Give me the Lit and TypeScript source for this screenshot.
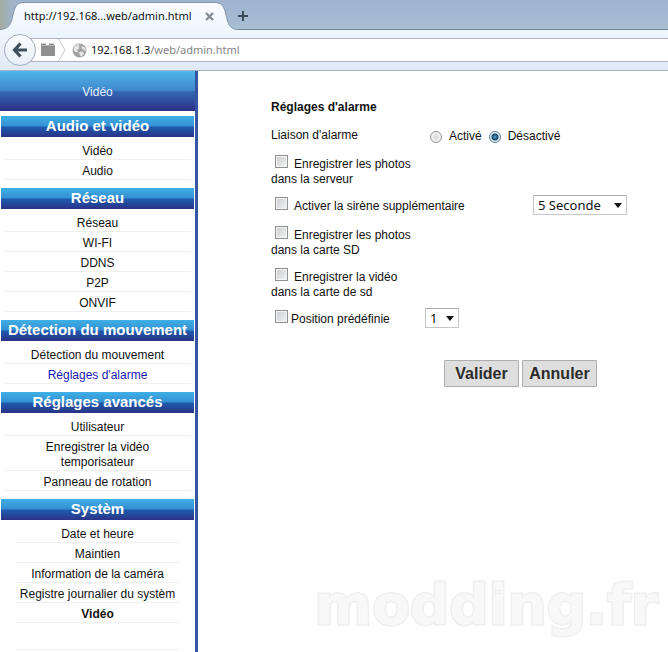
import { LitElement, html, css, svg, nothing } from "lit";
import { customElement, property, state } from "lit/decorators.js";
import { classMap } from "lit/directives/class-map.js";

interface MenuItem {
  label: string;
  kind?: "active" | "strong";
}

interface MenuSection {
  title: string;
  narrow?: boolean;
  items: MenuItem[];
}

const MENU: MenuSection[] = [
  { title: "Audio et vidéo", items: [{ label: "Vidéo" }, { label: "Audio" }] },
  {
    title: "Réseau",
    items: [
      { label: "Réseau" },
      { label: "WI-FI" },
      { label: "DDNS" },
      { label: "P2P" },
      { label: "ONVIF" },
    ],
  },
  {
    title: "Détection du mouvement",
    items: [
      { label: "Détection du mouvement" },
      { label: "Réglages d'alarme", kind: "active" },
    ],
  },
  {
    title: "Réglages avancés",
    items: [
      { label: "Utilisateur" },
      { label: "Enregistrer la vidéo temporisateur" },
      { label: "Panneau de rotation" },
    ],
  },
  {
    title: "Systèm",
    narrow: true,
    items: [
      { label: "Date et heure" },
      { label: "Maintien" },
      { label: "Information de la caméra" },
      { label: "Registre journalier du systèm" },
      { label: "Vidéo", kind: "strong" },
    ],
  },
];

@customElement("browser-chrome")
export class BrowserChrome extends LitElement {
  static styles = css`
    :host {
      display: block;
      font: 11px/16px "Noto Sans", sans-serif;
      color: #111;
    }
    button {
      border: 0;
      padding: 0;
      background: none;
      display: grid;
      place-items: center;
    }
    svg {
      display: block;
    }
    .strip {
      display: flex;
      height: 30px;
      background:
        linear-gradient(90deg, #a3ab9c 0, #9fb3c4 10px, transparent 24px),
        linear-gradient(#9db4d0, #a5b9d2 60%, #a9c0d2);
      box-shadow: inset 0 -1px #74849a;
    }
    .tab {
      position: relative;
      display: flex;
      align-items: center;
      width: 238px;
      box-sizing: border-box;
      padding: 2px 24px 0 24px;
    }
    .shape {
      position: absolute;
      inset: 0;
    }
    .tab-title {
      position: relative;
      flex: 1;
      white-space: nowrap;
    }
    .close {
      position: relative;
    }
    .add {
      width: 10px;
      padding-top: 2px;
    }
    .bar {
      display: flex;
      align-items: center;
      height: 40px;
      padding-left: 4px;
      background: linear-gradient(#eef7fe, #e0e9f6);
      border-bottom: 1px solid #a5b5c8;
    }
    .back {
      position: relative;
      width: 32px;
      height: 32px;
      border: 1px solid #a1acbb;
      border-radius: 50%;
      background: linear-gradient(#fbfdff, #e6eef8);
      flex: none;
    }
    .address {
      flex: 1;
      display: flex;
      align-items: center;
      height: 22px;
      margin-left: -6px;
      padding-left: 10px;
      background: #fff;
      border: solid #abb4c4;
      border-width: 1px 0;
    }
    .globe {
      margin: 0 4px 0 6px;
    }
    .path {
      color: #858585;
    }
  `;

  render() {
    return html`
      <header>
        <div class="strip">
          <div class="tab">
            <svg class="shape" width="238" height="30" viewBox="0 0 238 30">
              <defs>
                <linearGradient id="tabfill" x2="0" y2="1">
                  <stop offset="0" stop-color="#fafcff" />
                  <stop offset="1" stop-color="#eef7fe" />
                </linearGradient>
              </defs>
              <path
                d="M0 29.5C9 29 11 24 13 15C15 6 17 2.500 24 2.500H214C222 2.500 224 6 226 15C228 24 230 29.500 238 29.500V30H0Z"
                fill="url(#tabfill)"
              />
              <path
                d="M0 29.500C9 29 11 24 13 15C15 6 17 2.500 24 2.500H214C222 2.500 224 6 226 15C228 24 230 29.500 238 29.500"
                fill="none"
                stroke="#8595aa"
              />
            </svg>
            <span class="tab-title">http://192.168...web/admin.html</span>
            <button class="close" aria-label="Fermer l'onglet">
              <svg width="9" height="9" viewBox="0 0 9 9">
                <path d="M1 1L8 8M8 1L1 8" stroke="#858c95" stroke-width="2.400" />
              </svg>
            </button>
          </div>
          <button class="add" aria-label="Nouvel onglet">
            <svg width="10" height="10" viewBox="0 0 10 10">
              <path d="M5 0V10M0 5H10" stroke="#3d4956" stroke-width="2" />
            </svg>
          </button>
        </div>
        <div class="bar">
          <button class="back" aria-label="Précédent">
            <svg width="16" height="16" viewBox="0 0 16 16">
              <path
                d="M8.500 1.500L2.500 8L8.500 14.500M3 8H15"
                fill="none"
                stroke="#414f5c"
                stroke-width="3.200"
              />
            </svg>
          </button>
          <div class="address">
            <svg width="26" height="22" viewBox="0 0 26 22">
              <path d="M1 6V4.500H6V6H9V4.500H14V6H15V17H1Z" fill="#8f8f8f" />
              <path d="M1 6.500H15" stroke="#b5b5b5" />
              <path d="M18.500 0L25 11L18.500 22" fill="none" stroke="#c4c8ce" />
            </svg>
            <svg class="globe" width="15" height="15" viewBox="0 0 15 15">
              <circle cx="7.500" cy="7.500" r="7" fill="#a3a3a3" />
              <path
                d="M2 4L5 1.500L8 1.800L6.500 3.500L7.500 5L5 7L6 9L3.500 9L1.500 7ZM10 3L13 4.500L14 8L11.500 7L9.500 5ZM7 9L10.500 8.500L12 10.500L9.500 13.500L8 12.500Z"
                fill="#e6e6e6"
              />
            </svg>
            <span>192.168.1.3<span class="path">/web/admin.html</span></span>
          </div>
        </div>
      </header>
    `;
  }
}

@customElement("side-menu")
export class SideMenu extends LitElement {
  static styles = css`
    :host {
      display: block;
      box-sizing: border-box;
      border-right: 3px solid #3355a4;
      text-align: center;
      font: 12px/15px "Liberation Sans", Arial, sans-serif;
    }
    .current {
      height: 40px;
      line-height: 42px;
      margin-bottom: 5px;
      color: #e4f0ff;
      background: linear-gradient(#50b5ea, #4088cb 48%, #3468b4 52%, #2b2f83);
    }
    .title {
      margin: 0 1px 3px;
      height: 21px;
      font-size: 15px;
      line-height: 20px;
      color: #fff;
      white-space: nowrap;
      background: linear-gradient(#3fb0e6, #348fd2 48%, #1e5cae 52%, #2b3287);
    }
    ul {
      list-style: none;
      margin: 0 4px 8px;
      padding: 0;
    }
    .narrow {
      margin: 0 15px;
    }
    li {
      padding: 4px 20px 0;
      border-bottom: 1px solid #f0f0f2;
    }
    .narrow li {
      padding: 4px 0 0;
      white-space: nowrap;
    }
    .narrow .blank {
      height: 22px;
    }
    a {
      color: #111;
      text-decoration: none;
    }
    .active {
      color: #1a1ab8;
    }
    .strong {
      font-weight: bold;
    }
  `;

  render() {
    return html`
      <nav>
        <div class="current">Vidéo</div>
        ${MENU.map(
          (section) => html`
            <h2 class="title">${section.title}</h2>
            <ul class=${classMap({ narrow: !!section.narrow })}>
              ${section.items.map(
                (item) => html`<li>
                  <a
                    href="#"
                    class=${classMap({
                      active: item.kind === "active",
                      strong: item.kind === "strong",
                    })}
                    >${item.label}</a
                  >
                </li>`
              )}
              ${section.narrow ? html`<li class="blank"></li>` : nothing}
            </ul>
          `
        )}
      </nav>
    `;
  }
}

@customElement("alarm-form")
export class AlarmForm extends LitElement {
  @state() private linked = false;

  static styles = css`
    :host {
      display: block;
      font: 12px/15px "Liberation Sans", Arial, sans-serif;
      color: #111;
    }
    form {
      display: flex;
      flex-direction: column;
      gap: 12px;
    }
    h1 {
      margin: 0;
      font-size: 12px;
      line-height: 17px;
    }
    .row {
      display: flex;
      align-items: flex-start;
      min-height: 17px;
    }
    .label {
      width: 150px;
    }
    .wide {
      width: 262px;
    }
    .choices {
      display: flex;
      gap: 7px;
      margin-left: 9px;
    }
    .choice {
      display: flex;
      align-items: center;
      gap: 7px;
      line-height: 17px;
    }
    input {
      appearance: none;
      box-sizing: border-box;
      margin: 0;
    }
    .radio {
      width: 12px;
      height: 12px;
      border: 1px solid #8b8f94;
      border-radius: 50%;
      background: radial-gradient(#d4d4d4, #f2f2f2 60%, #fff);
    }
    .radio:checked {
      border-color: #5c7f99;
      background: radial-gradient(#4fa6cc 0, #143f63 3px, #d9e8f0 4px, #fff);
    }
    .box {
      width: 13px;
      height: 13px;
      margin: -2px 6px 0 4px;
      border: 1px solid #8e8f8f;
      background: linear-gradient(135deg, #c9ccd0, #f3f3f3);
      box-shadow: inset 0 0 0 1px #f4f4f4;
      vertical-align: baseline;
    }
    .tight .box {
      margin-right: 3px;
    }
    .box:checked {
      background: #2d6a95;
    }
    .picker {
      display: grid;
      margin-top: -4px;
    }
    .preset {
      margin-left: 4px;
    }
    select,
    .arrow {
      grid-area: 1 / 1;
    }
    select {
      appearance: none;
      box-sizing: border-box;
      height: 20px;
      padding: 0 24px 0 4px;
      border: 1px solid #c3c6ca;
      border-top-color: #a8abb0;
      border-radius: 0;
      background: #fff;
      color: #111;
      font: 13px/16px "Noto Sans", sans-serif;
    }
    .delay select {
      width: 94px;
    }
    .preset select {
      width: 34px;
      padding-right: 0;
    }
    .arrow {
      place-self: center end;
      margin-right: 5px;
      pointer-events: none;
    }
    .actions {
      display: flex;
      gap: 3px;
      margin: 19px 0 0 173px;
    }
    button {
      box-sizing: border-box;
      height: 27px;
      padding: 0 6px;
      min-width: 75px;
      border: 1px solid #adadad;
      border-radius: 1px;
      background: #dedede;
      color: #2c2c2c;
      font: bold 16px/20px "Liberation Sans", Arial, sans-serif;
    }
  `;

  private arrow() {
    return html`<svg class="arrow" width="8" height="5" viewBox="0 0 8 5">
      ${svg`<path d="M0 0H8L4 5Z" fill="#111" />`}
    </svg>`;
  }

  private check(text: string, wide = false) {
    return html`<label class=${classMap({ label: !wide, wide })}
      ><input class="box" type="checkbox" />${text}</label
    >`;
  }

  render() {
    return html`
      <form @submit=${(e: Event) => e.preventDefault()}>
        <h1>Réglages d'alarme</h1>
        <div class="row" role="radiogroup" aria-labelledby="link">
          <span class="label" id="link">Liaison d'alarme</span>
          <div class="choices">
            <label class="choice">
              <input
                class="radio"
                type="radio"
                name="link"
                .checked=${this.linked}
                @change=${() => (this.linked = true)}
              />Activé
            </label>
            <label class="choice">
              <input
                class="radio"
                type="radio"
                name="link"
                .checked=${!this.linked}
                @change=${() => (this.linked = false)}
              />Désactivé
            </label>
          </div>
        </div>
        <div class="row">${this.check("Enregistrer les photos dans la serveur")}</div>
        <div class="row">
          ${this.check("Activer la sirène supplémentaire", true)}
          <div class="picker delay">
            <select aria-label="Durée de la sirène">
              <option>5 Seconde</option>
              <option>10 Seconde</option>
            </select>
            ${this.arrow()}
          </div>
        </div>
        <div class="row">${this.check("Enregistrer les photos dans la carte SD")}</div>
        <div class="row">${this.check("Enregistrer la vidéo dans la carte de sd")}</div>
        <div class="row tight">
          ${this.check("Position prédéfinie")}
          <div class="picker preset">
            <select aria-label="Position prédéfinie">
              <option>1</option>
              <option>2</option>
            </select>
            ${this.arrow()}
          </div>
        </div>
        <div class="actions">
          <button type="submit">Valider</button>
          <button type="reset">Annuler</button>
        </div>
      </form>
    `;
  }
}

@customElement("site-mark")
export class SiteMark extends LitElement {
  @property() text = "modding.fr";

  static styles = css`
    :host {
      display: block;
      font: bold 55px/60px "DejaVu Sans", sans-serif;
      color: #f8f8f8;
      -webkit-text-stroke: 3px #efefef;
      paint-order: stroke fill;
      white-space: nowrap;
    }
  `;

  render() {
    return html`${this.text}`;
  }
}

@customElement("app-root")
export class AppRoot extends LitElement {
  static styles = css`
    :host {
      display: flex;
      flex-direction: column;
      min-height: 100vh;
      background: #fff;
    }
    .body {
      flex: 1;
      display: grid;
      grid-template-columns: 198px 1fr;
    }
    main {
      display: flex;
      flex-direction: column;
      justify-content: space-between;
      padding: 28px 10px 17px 73px;
    }
    .mark {
      align-self: flex-end;
    }
  `;

  render() {
    return html`
      <browser-chrome></browser-chrome>
      <div class="body">
        <side-menu></side-menu>
        <main>
          <alarm-form></alarm-form>
          <site-mark class="mark"></site-mark>
        </main>
      </div>
    `;
  }
}
